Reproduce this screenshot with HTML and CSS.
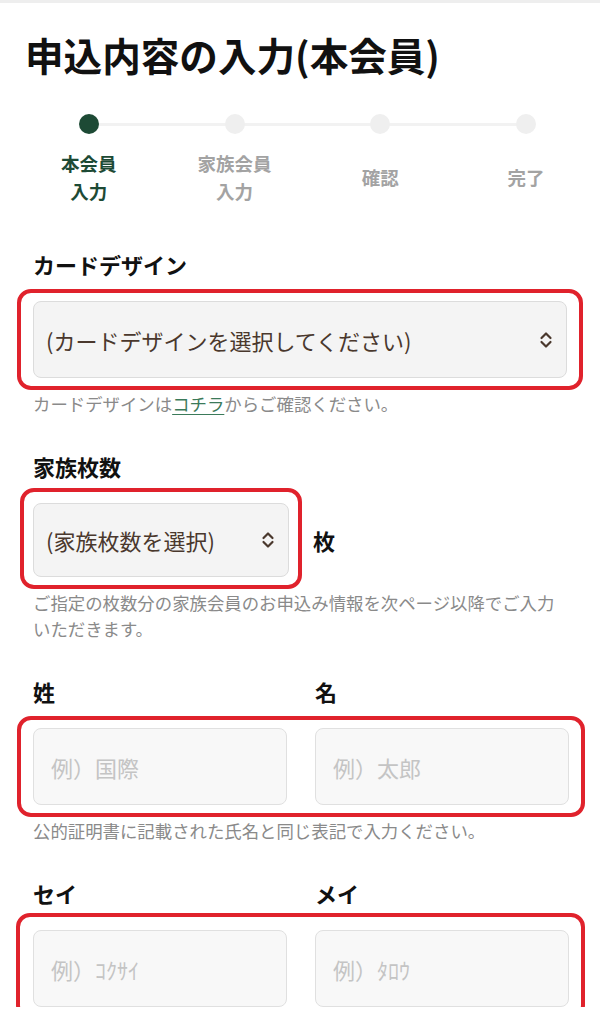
FILE: index.html
```html
<!DOCTYPE html>
<html lang="ja">
<head>
<meta charset="utf-8">
<title>申込内容の入力(本会員)</title>
<link rel="stylesheet" href="styles.css">
</head>
<body>
<div class="topbar"></div>
<main class="page">
  <h1 class="title">申込内容の入力(本会員)</h1>

  <ol class="steps">
    <li class="step is-active"><span class="dot"></span><span class="step-label">本会員<br>入力</span></li>
    <li class="step"><span class="dot"></span><span class="step-label">家族会員<br>入力</span></li>
    <li class="step"><span class="dot"></span><span class="step-label">確認</span></li>
    <li class="step"><span class="dot"></span><span class="step-label">完了</span></li>
  </ol>

  <section class="field">
    <div class="label">カードデザイン</div>
    <div class="hl hl-card">
      <div class="select">
        <span class="select-text">(カードデザインを選択してください)</span>
        <svg class="chev" viewBox="0 0 14 18" width="14" height="18"><path d="M2.5 7 L7 2.5 L11.5 7 M2.5 11 L7 15.5 L11.5 11" fill="none" stroke="#4a382d" stroke-width="2.2" stroke-linecap="round" stroke-linejoin="round"/></svg>
      </div>
    </div>
    <p class="help">カードデザインは<a class="link" href="#">コチラ</a>からご確認ください。</p>
  </section>

  <section class="field">
    <div class="label">家族枚数</div>
    <div class="count-row">
      <div class="hl hl-small">
        <div class="select select-small">
          <span class="select-text">(家族枚数を選択)</span>
          <svg class="chev" viewBox="0 0 14 18" width="14" height="18"><path d="M2.5 7 L7 2.5 L11.5 7 M2.5 11 L7 15.5 L11.5 11" fill="none" stroke="#4a382d" stroke-width="2.2" stroke-linecap="round" stroke-linejoin="round"/></svg>
        </div>
      </div>
      <span class="unit">枚</span>
    </div>
    <p class="help">ご指定の枚数分の家族会員のお申込み情報を次ページ以降でご入力いただきます。</p>
  </section>

  <section class="field">
    <div class="pair pair-labels">
      <div class="label">姓</div>
      <div class="label">名</div>
    </div>
    <div class="hl hl-wide">
      <div class="pair">
        <input class="text" type="text" placeholder="例）国際">
        <input class="text" type="text" placeholder="例）太郎">
      </div>
    </div>
    <p class="help">公的証明書に記載された氏名と同じ表記で入力ください。</p>
  </section>

  <section class="field">
    <div class="pair pair-labels">
      <div class="label">セイ</div>
      <div class="label">メイ</div>
    </div>
    <div class="hl hl-wide hl-kana">
      <div class="pair">
        <input class="text" type="text" placeholder="例）ｺｸｻｲ">
        <input class="text" type="text" placeholder="例）ﾀﾛｳ">
      </div>
    </div>
  </section>
</main>
</body>
</html>
```

FILE: styles.css
```css
* { box-sizing: border-box; }

html, body {
  margin: 0;
  padding: 0;
  background: #ffffff;
}

body {
  font-family: "Noto Sans CJK JP", "Noto Sans", sans-serif;
  color: #111;
  overflow: hidden;
}

.topbar {
  height: 3px;
  background: #eeeeee;
}

.page {
  padding: 0 33px;
}

.title {
  margin: 25px 0 0 -8px;
  font-size: 38.6px;
  line-height: 53px;
  font-weight: 700;
  color: #111;
  letter-spacing: 0;
}

/* stepper */
.steps {
  list-style: none;
  margin: 33px -32px 0 -17px;
  padding: 0;
  display: grid;
  grid-template-columns: repeat(4, 1fr);
  position: relative;
}

.steps::before {
  content: "";
  position: absolute;
  left: 12.5%;
  right: 12.5%;
  top: 9px;
  height: 3px;
  background: #f2f2f2;
}

.step {
  display: flex;
  flex-direction: column;
  align-items: center;
  position: relative;
}

.dot {
  width: 20px;
  height: 20px;
  border-radius: 50%;
  background: #efefef;
  position: relative;
}

.step.is-active .dot {
  background: #1d4a35;
}

.step-label {
  margin-top: 15px;
  min-height: 56px;
  display: flex;
  align-items: center;
  text-align: center;
  font-size: 18.5px;
  line-height: 28px;
  font-weight: 700;
  color: #a3a3a3;
}

.step.is-active .step-label {
  color: #1d4a35;
}

/* fields */
.field {
  margin-top: 34px;
}

.field:first-of-type {
  margin-top: 44px;
}

.label {
  font-size: 22px;
  line-height: 30px;
  font-weight: 700;
  color: #111;
  margin-bottom: 22px;
}

.hl {
  margin: -12px -16px;
  padding: 8px 12px;
  border: 4px solid #e0222c;
  border-radius: 14px;
}

.hl-wide {
  margin-right: -18px;
  padding-right: 14px;
}

.hl-kana {
  margin-top: -17px;
  padding-top: 13px;
  margin-left: -17px;
  padding-left: 13px;
}

.hl-small {
  margin: -15px -13px -12px -13px;
  padding: 11px 9px 8px 9px;
}

.select {
  height: 77px;
  background: #f4f4f4;
  border: 1px solid #dcdcdc;
  border-radius: 8px;
  padding: 0 13px 0 12px;
  display: flex;
  align-items: center;
  justify-content: space-between;
}

.select-small {
  width: 256px;
  height: 74px;
}

.select-text {
  font-size: 22px;
  color: #4a382d;
  white-space: nowrap;
}

.chev {
  flex: none;
}

.count-row {
  display: flex;
  align-items: center;
  gap: 24px;
}

.unit {
  font-size: 22px;
  font-weight: 700;
  color: #111;
}

.help {
  margin: 13px 0 0;
  font-size: 17.4px;
  line-height: 26px;
  color: #8a8a8a;
}

.link {
  color: #3b7a5a;
  text-decoration: underline;
  text-underline-offset: 3px;
}

.pair {
  display: grid;
  grid-template-columns: 1fr 1fr;
  column-gap: 28px;
}

.hl-wide .pair {
  margin-right: -2px;
}

.pair-labels {
  margin-right: -2px;
}

.text {
  display: block;
  width: 100%;
  height: 77px;
  margin: 0;
  background: #f8f8f8;
  border: 1px solid #e0e0e0;
  border-radius: 8px;
  padding: 0 17px;
  font-family: "Noto Sans CJK JP", "Noto Sans", sans-serif;
  font-size: 22px;
  color: #333;
  outline: none;
}

.text::placeholder {
  color: #c4c4c4;
}
```
